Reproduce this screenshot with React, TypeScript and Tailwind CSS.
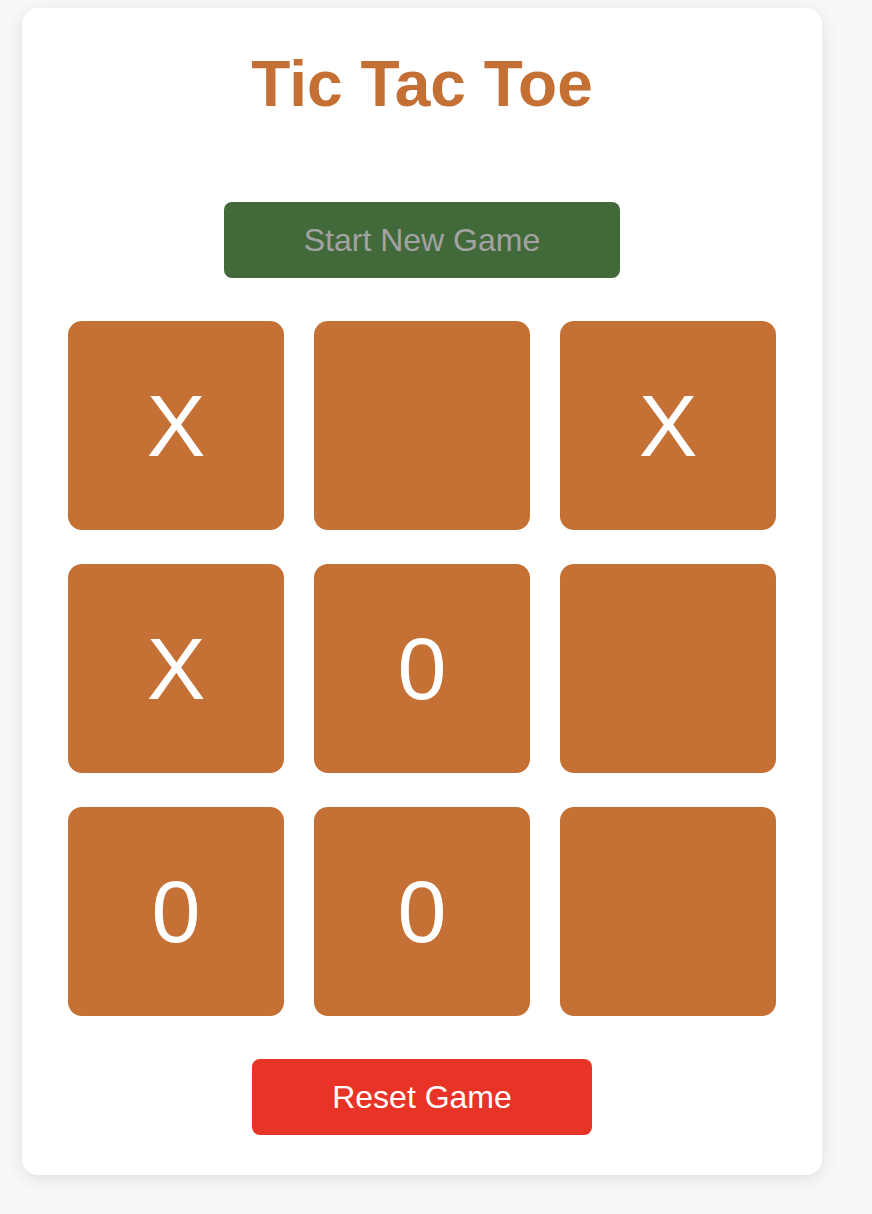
import React, { useState } from "react";

const initialBoard = ["X", "", "X", "X", "0", "", "0", "0", ""];

const App = () => {
	const [board, setBoard] = useState<string[]>(initialBoard);

	const handleReset = () => setBoard(Array(9).fill(""));
	const handleStart = () => setBoard(Array(9).fill(""));

	return (
		<div className="min-h-screen bg-[#f7f8fa] pt-[8px] pl-[22px] font-['Liberation_Sans',Arial,sans-serif]">
			<div className="w-[800px] bg-white rounded-[16px] shadow-[0_4px_18px_rgba(0,0,0,0.1)] px-[46px] pt-[44px] pb-[40px] flex flex-col items-center">
				<h1 className="text-[64px] leading-none font-bold text-[#c47035]">
					Tic Tac Toe
				</h1>
				<button
					onClick={handleStart}
					className="mt-[86px] w-[396px] h-[76px] rounded-[8px] bg-[#42693a] text-[#a3a3a3] text-[32px]"
				>
					Start New Game
				</button>
				<div className="mt-[43px] w-full grid grid-cols-3 gap-x-[30px] gap-y-[34px]">
					{board.map((cell, index) => (
						<div
							key={index}
							className="h-[209px] rounded-[14px] bg-[#c57034] flex items-center justify-center text-white text-[88px] leading-none"
						>
							{cell}
						</div>
					))}
				</div>
				<button
					onClick={handleReset}
					className="mt-[43px] w-[340px] h-[76px] rounded-[8px] bg-[#e83426] text-white text-[32px]"
				>
					Reset Game
				</button>
			</div>
		</div>
	);
};

export default App;
